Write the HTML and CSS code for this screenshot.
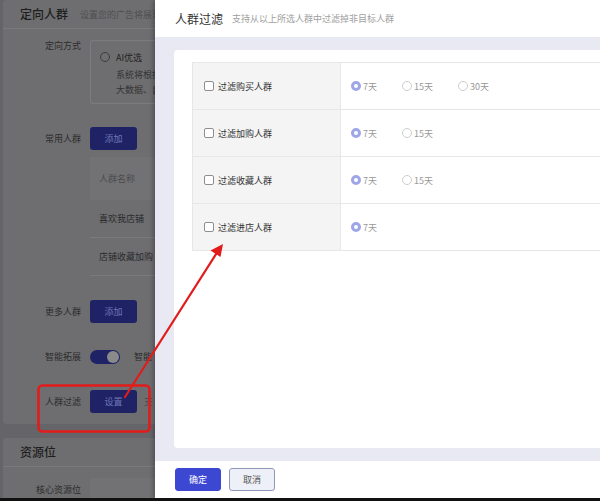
FILE: index.html
```html
<!DOCTYPE html>
<html lang="zh-CN">
<head>
<meta charset="utf-8">
<title>人群过滤</title>
<link rel="stylesheet" href="styles.css">
</head>
<body>
<div class="screen">
  <div class="page">
    <div class="page-inner">
      <section class="card card-target">
        <div class="card-head">
          <h2 class="card-title">定向人群</h2>
          <span class="card-sub">设置您的广告将展现</span>
        </div>
        <div class="form-row row-mode">
          <div class="form-label">定向方式</div>
          <div class="mode-box">
            <div class="mode-opt"><span class="bg-radio"></span><span class="mode-name">AI优选</span></div>
            <div class="mode-desc">系统将根据<br>大数据、自</div>
          </div>
        </div>
        <div class="form-row row-common">
          <div class="form-label lh-btn">常用人群</div>
          <div class="form-ctrl">
            <button class="bg-btn">添加</button>
            <div class="crowd-table">
              <div class="crowd-th">人群名称</div>
              <div class="crowd-tr">喜欢我店铺</div>
              <div class="crowd-tr">店铺收藏加购</div>
            </div>
          </div>
        </div>
        <div class="form-row row-more">
          <div class="form-label lh-btn">更多人群</div>
          <div class="form-ctrl"><button class="bg-btn">添加</button></div>
        </div>
        <div class="form-row row-smart">
          <div class="form-label lh-btn">智能拓展</div>
          <div class="form-ctrl inline">
            <span class="bg-toggle"><span class="bg-knob"></span></span>
            <span class="inline-text smart-text">智能</span>
          </div>
        </div>
        <div class="form-row row-filter">
          <div class="form-label lh-btn">人群过滤</div>
          <div class="form-ctrl inline">
            <button class="bg-btn">设置</button>
            <span class="inline-text filter-text">支</span>
          </div>
        </div>
      </section>
      <section class="card card-res">
        <div class="card-head">
          <h2 class="card-title">资源位</h2>
        </div>
        <div class="form-row row-res">
          <div class="form-label lh-res">核心资源位</div>
          <div class="res-box"><span class="res-text">资源位</span></div>
        </div>
      </section>
    </div>
  </div>

  <div class="drawer">
    <header class="drawer-head">
      <h3 class="drawer-title">人群过滤</h3>
      <span class="drawer-sub">支持从以上所选人群中过滤掉非目标人群</span>
    </header>
    <div class="drawer-body">
      <div class="panel">
        <table class="filter">
          <tbody>
            <tr>
              <td class="name-cell"><label class="chk"><span class="chk-box"></span>过滤购买人群</label></td>
              <td class="opt-cell">
                <span class="opt"><span class="radio on"></span>7天</span>
                <span class="opt"><span class="radio"></span>15天</span>
                <span class="opt"><span class="radio"></span>30天</span>
              </td>
            </tr>
            <tr>
              <td class="name-cell"><label class="chk"><span class="chk-box"></span>过滤加购人群</label></td>
              <td class="opt-cell">
                <span class="opt"><span class="radio on"></span>7天</span>
                <span class="opt"><span class="radio"></span>15天</span>
              </td>
            </tr>
            <tr>
              <td class="name-cell"><label class="chk"><span class="chk-box"></span>过滤收藏人群</label></td>
              <td class="opt-cell">
                <span class="opt"><span class="radio on"></span>7天</span>
                <span class="opt"><span class="radio"></span>15天</span>
              </td>
            </tr>
            <tr>
              <td class="name-cell"><label class="chk"><span class="chk-box"></span>过滤进店人群</label></td>
              <td class="opt-cell">
                <span class="opt"><span class="radio on"></span>7天</span>
              </td>
            </tr>
          </tbody>
        </table>
      </div>
    </div>
    <footer class="drawer-foot">
      <button class="btn btn-primary">确定</button>
      <button class="btn btn-default">取消</button>
    </footer>
  </div>

  <svg class="annot" width="600" height="498" viewBox="0 0 600 498" aria-hidden="true">
    <rect x="38.5" y="385.5" width="111" height="46" rx="4" ry="4" fill="none" stroke="#e21b1b" stroke-width="2.6"/>
    <line x1="125" y1="397" x2="218" y2="251" stroke="#e21b1b" stroke-width="2.2" stroke-linecap="round"/>
    <polygon points="223,244 220.5,257 210.5,250.5" fill="#e21b1b"/>
  </svg>
</div>
</body>
</html>
```

FILE: styles.css
```css
* { box-sizing: border-box; }

html, body {
  margin: 0;
  padding: 0;
}

body {
  background: #111;
  font-family: "Noto Sans CJK SC", "Noto Sans", sans-serif;
  width: 600px;
  height: 501px;
  overflow: hidden;
}

.screen {
  position: relative;
  display: flex;
  width: 600px;
  height: 498px;
  overflow: hidden;
}

/* ---------- background page (dimmed) ---------- */
.page {
  width: 155px;
  flex: none;
  overflow: hidden;
  background: #646469;
}

.page-inner {
  width: 170px;
  display: flex;
  flex-direction: column;
  gap: 14px;
}

.card {
  margin-left: 3px;
  background: #6e6e70;
  border-radius: 3px;
  overflow: hidden;
}

.card-target { padding-bottom: 11px; }

.card-head {
  height: 29px;
  padding-left: 17px;
  display: flex;
  align-items: center;
  gap: 12px;
  border-bottom: 1px solid #7a7a7c;
  white-space: nowrap;
  overflow: hidden;
}

.card-title {
  margin: 0;
  font-size: 12px;
  font-weight: 500;
  color: #1e1e1e;
  line-height: 26px;
  flex: none;
}

.card-sub {
  font-size: 9px;
  color: #4e4e50;
  overflow: hidden;
}

.form-row {
  display: flex;
  align-items: flex-start;
  gap: 9px;
}

.form-label {
  width: 78px;
  flex: none;
  text-align: right;
  font-size: 9px;
  color: #2c2c2c;
  line-height: 12px;
  white-space: nowrap;
}

.lh-btn { line-height: 23px; }

.row-mode { margin-top: 11px; }

.mode-box {
  flex: 1;
  height: 64px;
  border: 1px solid #7c7c7e;
  border-right: none;
  border-radius: 3px 0 0 3px;
  padding: 9px 0 0 9px;
  overflow: hidden;
  white-space: nowrap;
}

.mode-opt {
  display: flex;
  align-items: center;
  gap: 6px;
  height: 14px;
}

.bg-radio {
  width: 10px;
  height: 10px;
  border: 1px solid #3c3c3e;
  border-radius: 50%;
}

.mode-name {
  font-size: 9px;
  color: #1e1e1e;
}

.mode-desc {
  margin: 3px 0 0 16px;
  font-size: 9px;
  line-height: 15px;
  color: #333335;
}

.row-common { margin-top: 23px; }

.form-ctrl { display: flex; flex-direction: column; flex: 1; overflow: hidden; }
.form-ctrl.inline { flex-direction: row; align-items: center; height: 23px; white-space: nowrap; }

.bg-btn {
  width: 47px;
  height: 23px;
  flex: none;
  border: none;
  border-radius: 3px;
  background: #1f2366;
  color: #6f76b4;
  font-family: inherit;
  font-size: 9px;
  padding: 0;
}

.crowd-table {
  margin-top: 7px;
  white-space: nowrap;
  overflow: hidden;
}

.crowd-th {
  height: 43px;
  line-height: 43px;
  padding-left: 9px;
  background: #727274;
  font-size: 9px;
  color: #4c4c4e;
}

.crowd-tr {
  height: 38px;
  line-height: 38px;
  padding-left: 9px;
  border-bottom: 1px solid #7a7a7c;
  font-size: 9px;
  color: #2a2a2c;
}

.row-more { margin-top: 24px; }
.row-smart { margin-top: 22px; }
.row-filter { margin-top: 22px; }

.bg-toggle {
  width: 30px;
  height: 14px;
  flex: none;
  border-radius: 7px;
  background: #1f2366;
  display: flex;
  align-items: center;
  justify-content: flex-end;
  padding-right: 1px;
}

.bg-knob {
  width: 12px;
  height: 12px;
  border-radius: 50%;
  background: #8a8a8c;
}

.inline-text {
  font-size: 9px;
  color: #2c2c2c;
}

.smart-text { margin-left: 14px; }
.filter-text { margin-left: 7px; color: #4a4a4c; }

.card-res { height: 80px; }

.row-res { margin-top: 11px; }

.lh-res { line-height: 24px; }

.res-box {
  flex: 1;
  height: 40px;
  background: #727274;
  padding: 14px 0 0 35px;
  white-space: nowrap;
  overflow: hidden;
}

.res-text {
  font-size: 9px;
  color: #4c4c4e;
}

/* ---------- drawer ---------- */
.drawer {
  flex: 1;
  display: flex;
  flex-direction: column;
  background: #fff;
  box-shadow: -2px 0 4px rgba(0, 0, 0, 0.25);
  position: relative;
}

.drawer-head {
  height: 37px;
  flex: none;
  display: flex;
  align-items: center;
  padding-left: 20px;
  gap: 9px;
}

.drawer-title {
  margin: 0;
  font-size: 12px;
  font-weight: 400;
  color: #333;
}

.drawer-sub {
  font-size: 9px;
  color: #a0a0a0;
}

.drawer-body {
  flex: 1;
  background: #e8e9f3;
  padding: 13px 0 13px 19px;
}

.panel {
  height: 100%;
  background: #fff;
  border-radius: 4px 0 0 4px;
  padding: 12px 0 0 18px;
  overflow: hidden;
}

.filter {
  border-collapse: collapse;
  width: 430px;
}

.filter td {
  border: 1px solid #e7e7e7;
  height: 47px;
  padding: 0;
  vertical-align: middle;
}

.name-cell {
  width: 148px;
  background: #f4f4f4;
  padding-left: 11px !important;
}

.chk {
  display: flex;
  align-items: center;
  font-size: 9px;
  color: #333;
}

.chk-box {
  width: 10px;
  height: 10px;
  border: 1px solid #8e8e8e;
  border-radius: 2px;
  background: #fff;
  margin-right: 4px;
}

.opt-cell {
  padding-left: 10px !important;
  font-size: 0;
}

.opt {
  display: inline-flex;
  align-items: center;
  font-size: 9px;
  color: #999;
  margin-right: 25px;
}

.radio {
  width: 10px;
  height: 10px;
  border-radius: 50%;
  border: 1px solid #cdcdcd;
  background: #fff;
  margin-right: 2px;
}

.radio.on {
  border: 3px solid #9ea6e8;
}

.drawer-foot {
  height: 37px;
  flex: none;
  display: flex;
  align-items: center;
  gap: 8px;
  padding-left: 20px;
  background: #fff;
}

.btn {
  width: 46px;
  height: 23px;
  border-radius: 3px;
  font-family: inherit;
  font-size: 9px;
  padding: 0;
}

.btn-primary {
  background: #3c47d2;
  border: 1px solid #3c47d2;
  color: #fff;
}

.btn-default {
  background: #eef0f7;
  border: 1px solid #8f97bb;
  color: #555;
}

/* ---------- annotation overlay ---------- */
.annot {
  position: absolute;
  left: 0;
  top: 0;
  pointer-events: none;
}
```
